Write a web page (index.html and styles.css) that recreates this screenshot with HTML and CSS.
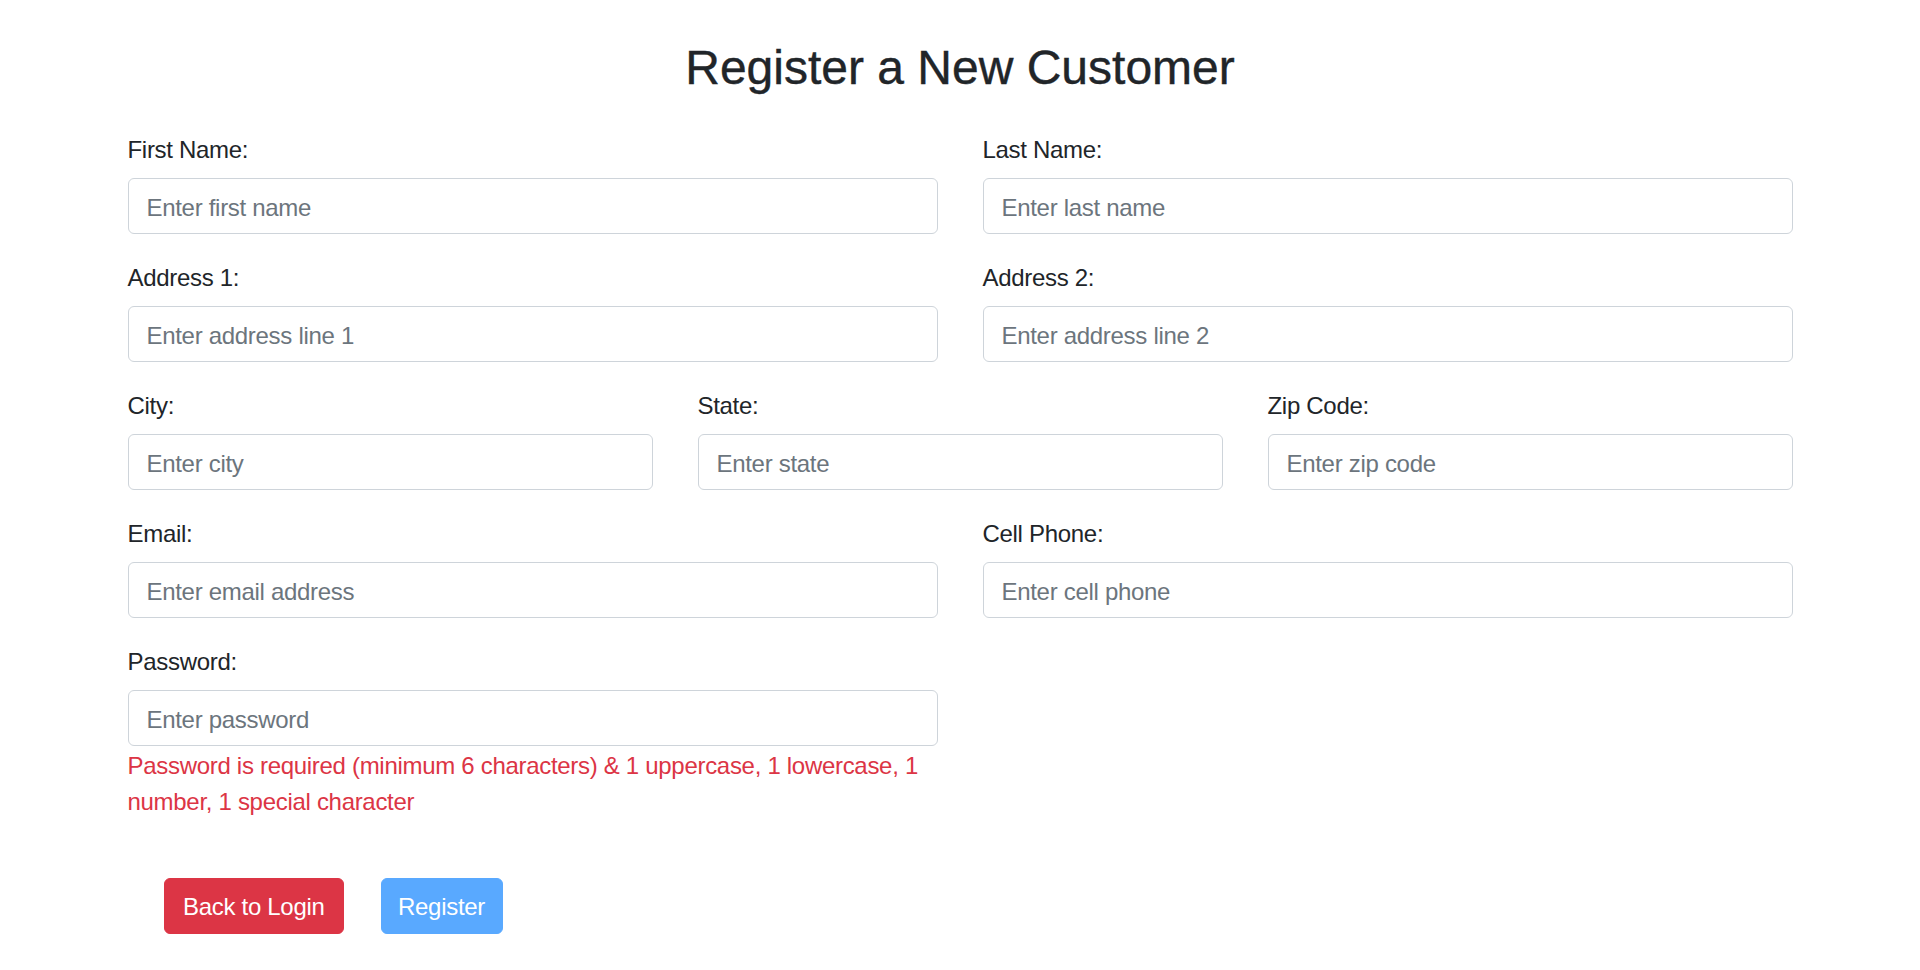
FILE: index.html
```html
<!DOCTYPE html>
<html lang="en">
<head>
<meta charset="utf-8">
<title>Register a New Customer</title>
<link rel="stylesheet" href="styles.css">
</head>
<body>
<div class="container">
  <h2 class="title">Register a New Customer</h2>
  <form class="form">
    <div class="row row-2">
      <div class="field">
        <label class="label" for="first">First Name:</label>
        <input class="input" id="first" type="text" placeholder="Enter first name">
      </div>
      <div class="field">
        <label class="label" for="last">Last Name:</label>
        <input class="input" id="last" type="text" placeholder="Enter last name">
      </div>
    </div>
    <div class="row row-2">
      <div class="field">
        <label class="label" for="addr1">Address 1:</label>
        <input class="input" id="addr1" type="text" placeholder="Enter address line 1">
      </div>
      <div class="field">
        <label class="label" for="addr2">Address 2:</label>
        <input class="input" id="addr2" type="text" placeholder="Enter address line 2">
      </div>
    </div>
    <div class="row row-3">
      <div class="field">
        <label class="label" for="city">City:</label>
        <input class="input" id="city" type="text" placeholder="Enter city">
      </div>
      <div class="field">
        <label class="label" for="state">State:</label>
        <input class="input" id="state" type="text" placeholder="Enter state">
      </div>
      <div class="field">
        <label class="label" for="zip">Zip Code:</label>
        <input class="input" id="zip" type="text" placeholder="Enter zip code">
      </div>
    </div>
    <div class="row row-2">
      <div class="field">
        <label class="label" for="email">Email:</label>
        <input class="input" id="email" type="email" placeholder="Enter email address">
      </div>
      <div class="field">
        <label class="label" for="cell">Cell Phone:</label>
        <input class="input" id="cell" type="text" placeholder="Enter cell phone">
      </div>
    </div>
    <div class="row row-2">
      <div class="field field-last">
        <label class="label" for="password">Password:</label>
        <input class="input" id="password" type="password" placeholder="Enter password">
        <div class="error">Password is required (minimum 6 characters) &amp; 1 uppercase, 1 lowercase, 1 number, 1 special character</div>
      </div>
    </div>
    <div class="actions">
      <button type="button" class="btn btn-danger">Back to Login</button>
      <button type="submit" class="btn btn-primary" disabled>Register</button>
    </div>
  </form>
</div>
</body>
</html>
```
FILE: styles.css
```css
* {
  box-sizing: border-box;
}

html, body {
  margin: 0;
  padding: 0;
  background: #ffffff;
}

body {
  font-family: "Liberation Sans", Arial, sans-serif;
  font-size: 24px;
  line-height: 36px;
  color: #212529;
  letter-spacing: -0.3px;
}

.container {
  width: 1710px;
  margin: 0 auto;
  padding: 0 22.5px;
}

.title {
  margin: 39px 0 33px;
  font-size: 48px;
  line-height: 57.6px;
  font-weight: 400;
  text-align: center;
  letter-spacing: 0;
  color: #212529;
  -webkit-text-stroke: 0.4px #212529;
}

.form {
  margin: 0;
}

.row {
  display: grid;
  column-gap: 45px;
}

.row-2 {
  grid-template-columns: 1fr 1fr;
}

.row-3 {
  grid-template-columns: 1fr 1fr 1fr;
}

.field {
  margin-bottom: 24px;
  min-width: 0;
}

.field-last {
  margin-bottom: 0;
}

.label {
  display: block;
  padding-top: 2px;
  margin-bottom: 10px;
  line-height: 36px;
}

.input {
  display: block;
  width: 100%;
  height: 56px;
  padding: 11px 18px 7px;
  font-family: inherit;
  font-size: 24px;
  line-height: 36px;
  letter-spacing: -0.3px;
  color: #495057;
  background: #ffffff;
  border: 1px solid #ced4da;
  border-radius: 6px;
  outline: none;
}

.input::placeholder {
  color: #6c757d;
  opacity: 1;
}

.error {
  padding-top: 2px;
  color: #dc3545;
  line-height: 36px;
}

.actions {
  display: flex;
  gap: 37px;
  margin-top: 58px;
  padding-left: 36.5px;
}

.btn {
  height: 56px;
  padding: 10px 18px 8px;
  font-family: inherit;
  font-size: 24px;
  line-height: 36px;
  letter-spacing: -0.3px;
  color: #ffffff;
  border: 1px solid transparent;
  border-radius: 6px;
  cursor: pointer;
}

.btn-danger {
  background: #dc3545;
  border-color: #dc3545;
}

.btn-primary {
  padding-left: 16.5px;
  padding-right: 16.5px;
  background: #59a9ff;
  border-color: #59a9ff;
}

.btn-primary:disabled {
  cursor: default;
}
```
